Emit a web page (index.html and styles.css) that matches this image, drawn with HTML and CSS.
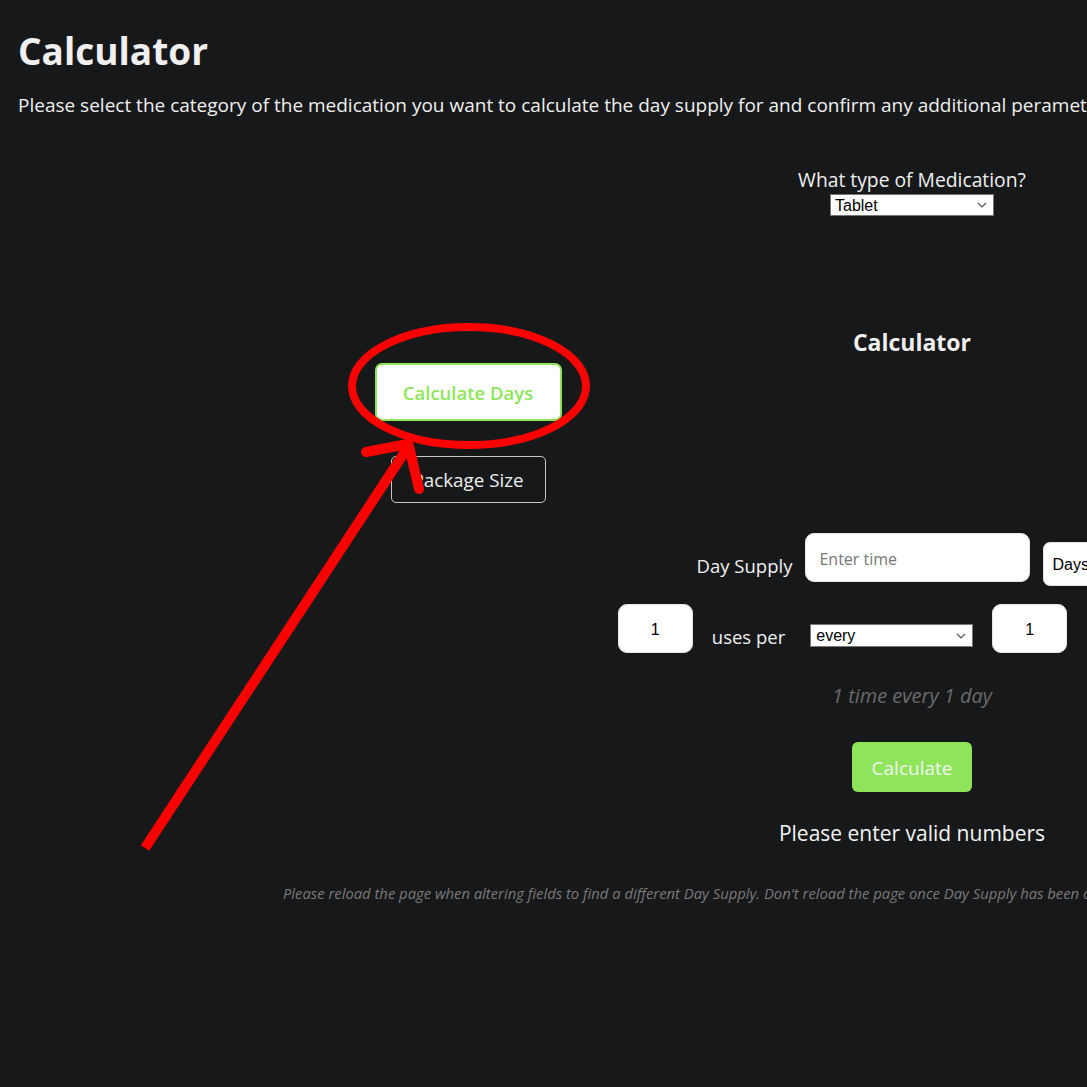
FILE: index.html
```html
<!DOCTYPE html>
<html>
<head>
<meta charset="utf-8">
<title>Calculator</title>
<link rel="stylesheet" href="styles.css">
</head>
<body>
<div class="page">
  <h1 class="title">Calculator</h1>
  <p class="intro">Please select the category of the medication you want to calculate the day supply for and confirm any additional peramet</p>
  <div class="layout">
    <div class="left-col">
      <button class="btn-days">Calculate Days</button>
      <button class="btn-package">Package Size</button>
    </div>
    <div class="right-col">
      <div class="type-label">What type of Medication?</div>
      <select class="type-select"><option>Tablet</option></select>
      <h2 class="sub-title">Calculator</h2>
      <div class="row row-one">
        <span class="row-label">Day Supply</span>
        <input class="text-input wide" type="text" placeholder="Enter time">
        <select class="unit-select"><option>Days</option></select>
      </div>
      <div class="row row-two">
        <input class="text-input small" type="text" value="1">
        <span class="row-label uses">uses per</span>
        <select class="freq-select"><option>every</option></select>
        <input class="text-input small" type="text" value="1">
        <select class="period-select"><option>day(s)</option></select>
      </div>
      <div class="summary">1 time every 1 day</div>
      <button class="btn-calc">Calculate</button>
      <div class="result">Please enter valid numbers</div>
    </div>
  </div>
  <p class="note">Please reload the page when altering fields to find a different Day Supply. Don't reload the page once Day Supply has been c</p>
</div>
<svg class="annotation" width="1087" height="1087" viewBox="0 0 1087 1087">
  <ellipse cx="469" cy="386" rx="117" ry="59" fill="none" stroke="#ff0000" stroke-width="8"/>
  <line x1="145" y1="848" x2="408" y2="447" stroke="#ff0000" stroke-width="10"/>
  <line x1="366" y1="452" x2="408" y2="444" stroke="#ff0000" stroke-width="10" stroke-linecap="round"/>
  <line x1="409" y1="446" x2="419" y2="489" stroke="#ff0000" stroke-width="10" stroke-linecap="round"/>
</svg>
</body>
</html>
```

FILE: styles.css
```css
html, body {
  margin: 0;
  padding: 0;
  background: #17181a;
  overflow: hidden;
}

body {
  font-family: "Open Sans", "Noto Sans", sans-serif;
  color: #f0f0f0;
  width: 1087px;
  height: 1087px;
  position: relative;
}

.page {
  padding: 0 0 0 18px;
  width: 1600px;
}

.title {
  font-size: 37px;
  font-weight: 700;
  line-height: 48px;
  margin: 27px 0 0 0;
}

.intro {
  font-size: 19px;
  line-height: 28px;
  margin: 16px 0 0 0;
  white-space: nowrap;
}

.layout {
  display: grid;
  grid-template-columns: 444px 444px;
  margin-left: 228px;
}

.left-col {
  display: flex;
  flex-direction: column;
  align-items: center;
}

.btn-days {
  margin-top: 244px;
  width: 187px;
  height: 58px;
  background: #ffffff;
  border: 2px solid #8ee55a;
  border-radius: 7px;
  color: #8ee55a;
  font-family: inherit;
  font-size: 18.5px;
  font-weight: 600;
}

.btn-package {
  margin-top: 35px;
  width: 155px;
  height: 47px;
  background: transparent;
  border: 1px solid #c8c8c8;
  border-radius: 5px;
  color: #f0f0f0;
  font-family: inherit;
  font-size: 18.8px;
  padding: 0;
}

.right-col {
  display: flex;
  flex-direction: column;
  align-items: center;
}

.type-label {
  margin-top: 47px;
  font-size: 19.3px;
  line-height: 28px;
}

.type-select,
.freq-select {
  appearance: none;
  -webkit-appearance: none;
  background-color: #ffffff;
  background-image: url("data:image/svg+xml;utf8,<svg xmlns='http://www.w3.org/2000/svg' width='10' height='6' viewBox='0 0 10 6'><path d='M1 1l4 4 4-4' fill='none' stroke='%23555' stroke-width='1.2'/></svg>");
  background-repeat: no-repeat;
  background-position: right 6px center;
  color: #000;
  border: 1px solid #767676;
  border-radius: 0;
  font-family: "Liberation Sans", Arial, sans-serif;
  font-size: 16px;
  line-height: 20px;
}

.type-select {
  width: 164px;
  height: 22px;
  padding: 1px 4px 0 4px;
}

.sub-title {
  margin: 110px 0 0 0;
  font-size: 23px;
  line-height: 32px;
  font-weight: 700;
}

.row {
  display: flex;
  justify-content: center;
  align-items: flex-start;
  width: 444px;
}

.row-one {
  margin-top: 175px;
  gap: 13px;
}

.row-two {
  margin-top: 18px;
  gap: 0;
}

.row-label {
  font-size: 18.5px;
  line-height: 26px;
  margin-top: 20px;
  white-space: nowrap;
  flex-shrink: 0;
}

.text-input {
  flex-shrink: 0;
  height: 49px;
  box-sizing: border-box;
  border: 1px solid #e4e4e4;
  border-radius: 9px;
  background: #ffffff;
  font-family: "Liberation Sans", Arial, sans-serif;
  font-size: 16px;
  color: #000;
}

.text-input.wide {
  width: 225px;
  padding: 3px 13px 0 13px;
  font-family: "Open Sans", sans-serif;
  font-size: 16px;
}

.text-input.wide::placeholder {
  color: #777;
}

.text-input.small {
  width: 75px;
  text-align: center;
  padding-top: 3px;
}

.unit-select {
  flex-shrink: 0;
  margin-top: 9px;
  width: 84px;
  height: 44px;
  border: 1px solid #e4e4e4;
  border-radius: 7px;
  background: #ffffff;
  color: #000;
  font-family: "Liberation Sans", Arial, sans-serif;
  font-size: 16px;
  padding: 0 4px;
}

.uses {
  margin-left: 19px;
}

.freq-select {
  flex-shrink: 0;
  margin-top: 20px;
  margin-left: 25px;
  width: 163px;
  height: 23px;
  padding: 0 5px;
}

.freq-select + .text-input.small {
  margin-left: 19px;
}

.period-select {
  flex-shrink: 0;
  margin-top: 9px;
  margin-left: 21px;
  width: 118px;
  height: 44px;
  border: 1px solid #e4e4e4;
  border-radius: 7px;
  background: #ffffff;
  color: #000;
  font-family: "Liberation Sans", Arial, sans-serif;
  font-size: 16px;
}

.summary {
  margin-top: 26px;
  font-size: 20px;
  line-height: 26px;
  font-style: italic;
  color: #6a6a6a;
}

.btn-calc {
  margin-top: 33px;
  width: 120px;
  height: 50px;
  background: #8ee55a;
  border: none;
  border-radius: 6px;
  color: #f2f2f2;
  font-family: inherit;
  font-size: 19px;
  padding: 2px 0 0 0;
}

.result {
  margin-top: 27px;
  font-size: 21px;
  line-height: 28px;
  color: #f4f4f4;
}

.note {
  margin: 36px 0 0 265px;
  font-size: 14.8px;
  line-height: 20px;
  font-style: italic;
  color: #7a7a7a;
  white-space: nowrap;
}

.annotation {
  position: absolute;
  left: 0;
  top: 0;
  pointer-events: none;
}
```
